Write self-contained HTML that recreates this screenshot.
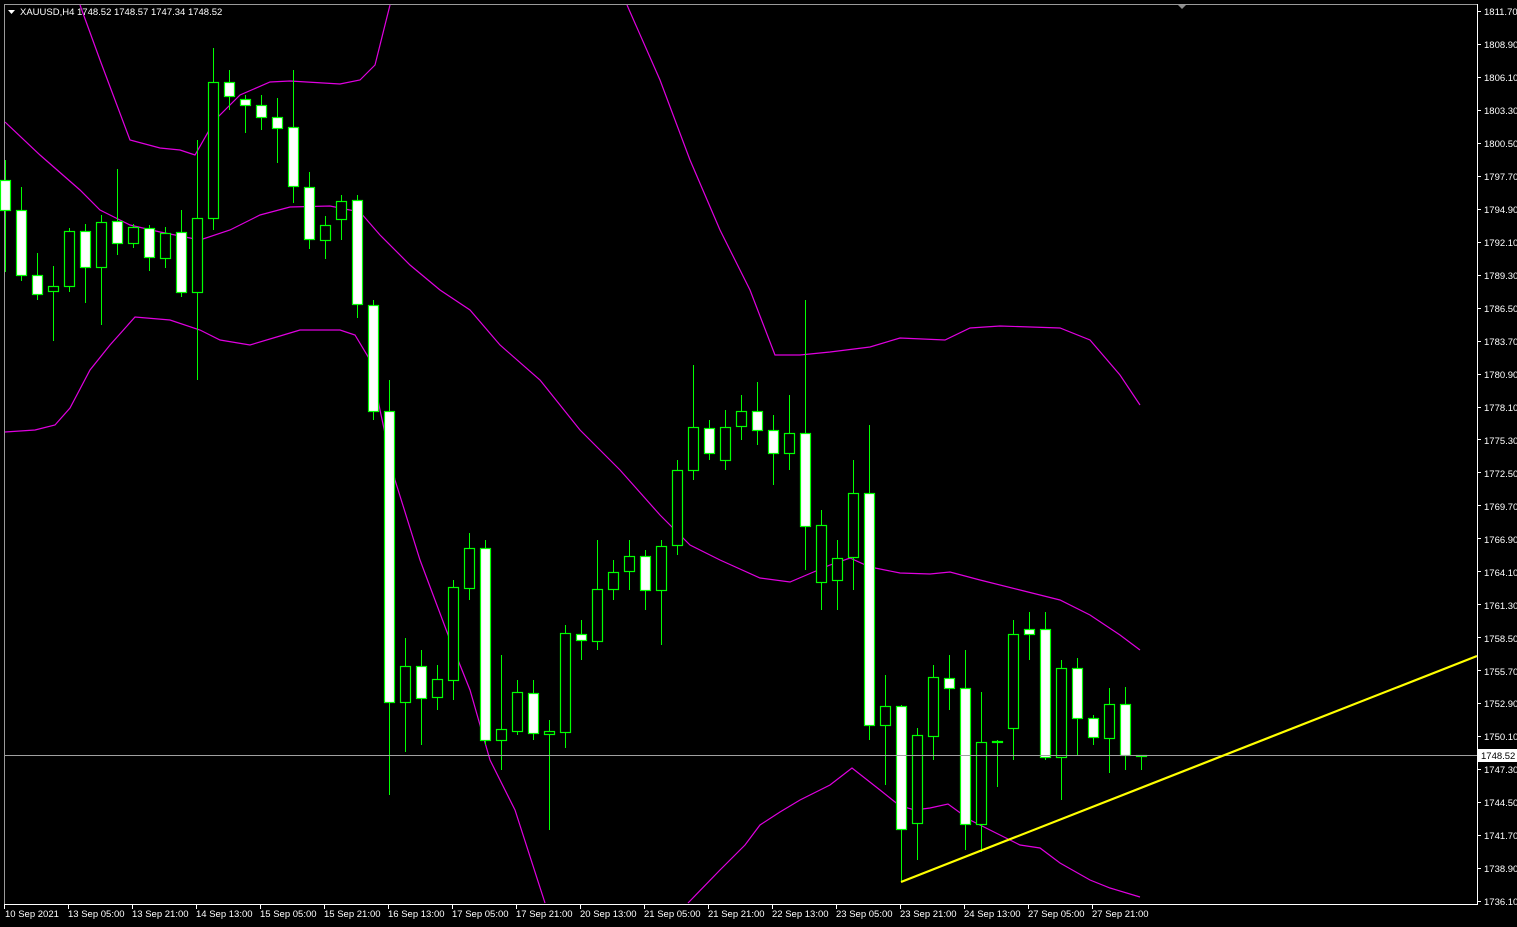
<!DOCTYPE html>
<html><head><meta charset="utf-8"><style>
html,body{margin:0;padding:0;background:#000;width:1517px;height:927px;overflow:hidden}
svg{display:block}
text{font-family:"Liberation Sans",sans-serif;font-size:9.5px;fill:#fff}
</style></head><body>
<svg id="s" width="1517" height="927" xmlns="http://www.w3.org/2000/svg">
<rect x="0" y="0" width="1517" height="927" fill="#000"/>
<line x1="4.5" y1="4" x2="4.5" y2="905" stroke="#9a9a9a"/>
<line x1="4" y1="4.5" x2="1478" y2="4.5" stroke="#9a9a9a"/>
<line x1="1477.5" y1="4" x2="1477.5" y2="905" stroke="#fff"/>
<line x1="4" y1="904.5" x2="1478" y2="904.5" stroke="#fff"/>
<polygon points="1178,5 1186,5 1182,9" fill="#8c8c8c"/>
<g fill="none" stroke="#e000e0" stroke-width="1.2">
<polyline points="80,5 100,60 130,140 160,148 180,150 195,155 215,120 240,95 270,82 290,81 340,84 360,80 375,65 390,5"/>
<polyline points="627,5 660,80 690,160 720,230 750,290 775,355 800,355 830,352 870,347 900,338 945,340 970,328 1000,326 1060,328 1090,340 1120,375 1140,405"/>
<polyline points="5,122 40,155 80,190 100,210 130,225 160,232 200,240 230,230 260,215 290,207 330,206 360,212 380,235 410,265 440,290 470,310 500,345 540,380 580,430 620,470 660,515 690,545 720,560 760,578 790,582 830,565 850,558 870,567 900,573 930,574 950,572 980,580 1020,590 1060,600 1090,615 1120,635 1140,650"/>
<polyline points="5,432 35,430 55,425 70,408 90,370 110,345 135,317 170,320 200,330 220,340 250,345 280,336 300,330 340,330 355,335 370,360 380,410 395,480 420,560 450,640 470,690 490,760 515,810 545,903"/>
<polyline points="688,903 720,870 745,845 760,825 780,812 800,800 830,785 852,768 880,790 900,806 915,810 930,808 948,804 970,820 1000,835 1020,845 1040,848 1060,863 1090,880 1110,888 1140,897"/>
</g>
<g id="c"></g>
<line x1="5" y1="755.5" x2="1477" y2="755.5" stroke="#a0a0a0"/>
<line x1="901" y1="882" x2="1477" y2="656" stroke="#ffff00" stroke-width="2.2"/>
<text x="20" y="15">XAUUSD,H4  1748.52 1748.57 1747.34 1748.52</text>
<polygon points="8,10 15,10 11.5,14" fill="#fff"/>
<g id="ax"></g>
<rect x="1478" y="749" width="39" height="13" fill="#fff"/>
<text x="1481" y="759" style="fill:#000">1748.52</text>
<g>
<text x="1484" y="15">1811.70</text><text x="1484" y="48">1808.90</text><text x="1484" y="81">1806.10</text><text x="1484" y="114">1803.30</text><text x="1484" y="147">1800.50</text><text x="1484" y="180">1797.70</text><text x="1484" y="213">1794.90</text><text x="1484" y="246">1792.10</text><text x="1484" y="279">1789.30</text><text x="1484" y="312">1786.50</text><text x="1484" y="345">1783.70</text><text x="1484" y="378">1780.90</text><text x="1484" y="411">1778.10</text><text x="1484" y="444">1775.30</text><text x="1484" y="477">1772.50</text><text x="1484" y="510">1769.70</text><text x="1484" y="543">1766.90</text><text x="1484" y="576">1764.10</text><text x="1484" y="609">1761.30</text><text x="1484" y="642">1758.50</text><text x="1484" y="675">1755.70</text><text x="1484" y="707">1752.90</text><text x="1484" y="740">1750.10</text><text x="1484" y="773">1747.30</text><text x="1484" y="806">1744.50</text><text x="1484" y="839">1741.70</text><text x="1484" y="872">1738.90</text><text x="1484" y="905">1736.10</text>
</g>
<g>
<text x="5" y="917">10 Sep 2021</text><text x="68" y="917">13 Sep 05:00</text><text x="132" y="917">13 Sep 21:00</text><text x="196" y="917">14 Sep 13:00</text><text x="260" y="917">15 Sep 05:00</text><text x="324" y="917">15 Sep 21:00</text><text x="388" y="917">16 Sep 13:00</text><text x="452" y="917">17 Sep 05:00</text><text x="516" y="917">17 Sep 21:00</text><text x="580" y="917">20 Sep 13:00</text><text x="644" y="917">21 Sep 05:00</text><text x="708" y="917">21 Sep 21:00</text><text x="772" y="917">22 Sep 13:00</text><text x="836" y="917">23 Sep 05:00</text><text x="900" y="917">23 Sep 21:00</text><text x="964" y="917">24 Sep 13:00</text><text x="1028" y="917">27 Sep 05:00</text><text x="1092" y="917">27 Sep 21:00</text>
</g>
</svg>
<script>
var d=[["w",180,210,160,272],["w",210,275,187,281],["w",275,294,253,300],["b",286,291,266,341],["b",231,286,228,292],["w",231,267,224,303],["b",222,267,215,325],["w",221,243,169,255],["b",227,243,224,248],["w",228,257,225,271],["b",233,258,227,268],["w",232,292,210,297],["b",218,292,140,380],["b",82,218,48,230],["w",82,96,70,110],["w",99,105,95,133],["w",105,117,95,130],["w",117,128,98,163],["w",127,186,70,203],["w",187,239,172,249],["b",225,240,216,259],["b",201,219,195,240],["w",200,304,195,318],["w",305,411,300,420],["w",411,702,380,795],["b",666,702,638,752],["w",666,698,650,745],["b",679,697,665,710],["b",587,680,580,700],["b",548,588,533,600],["w",548,740,540,745],["b",729,740,655,770],["b",692,731,680,735],["w",693,733,680,740],["b",731,734,720,830],["b",633,732,625,748],["w",634,640,620,660],["b",589,641,540,650],["b",572,589,560,600],["b",556,571,540,590],["w",556,590,550,610],["b",546,590,540,645],["b",470,545,460,555],["b",427,470,365,480],["w",428,453,420,460],["b",427,460,410,470],["b",411,426,395,440],["w",411,430,382,445],["w",430,453,415,485],["b",433,453,395,470],["w",433,526,300,570],["b",525,582,510,610],["b",558,580,540,610],["b",493,557,460,590],["w",493,725,425,740],["b",706,725,675,785],["w",706,829,705,882],["b",735,823,728,860],["b",677,736,665,760],["w",678,688,655,710],["w",688,824,650,850],["b",742,824,692,852],["b",741,742,740,787],["b",634,728,620,760],["w",629,634,612,660],["w",629,757,612,760],["b",668,757,660,800],["w",668,718,658,755],["w",718,737,715,745],["b",704,738,688,773],["w",704,755,687,770],["b",755,756,755,770]];
var h="";
for(var i=0;i<d.length;i++){var c=d[i],x=5+16*i;
h+='<line x1="'+(x+.5)+'" y1="'+c[3]+'" x2="'+(x+.5)+'" y2="'+c[4]+'" stroke="#00ff00"/>';
var ht=Math.max(c[2]-c[1],1);
h+='<rect x="'+(x-4.5)+'" y="'+(c[1]+.5)+'" width="10" height="'+ht+'" fill="'+(c[0]=="w"?"#fff":"#000")+'" stroke="#00ff00" stroke-width="1.2"/>';}
document.getElementById("c").innerHTML=h;
var a="";
for(var k=0;k<28;k++){var y=Math.round(11+k*32.96)+.5;a+='<line x1="1477" y1="'+y+'" x2="1481" y2="'+y+'" stroke="#fff"/>';}
for(var k=0;k<18;k++){var x=(k==0?4:68+64*(k-1))+.5;a+='<line x1="'+x+'" y1="904" x2="'+x+'" y2="909" stroke="#fff"/>';}
document.getElementById("ax").innerHTML=a;
</script>
</body></html>
